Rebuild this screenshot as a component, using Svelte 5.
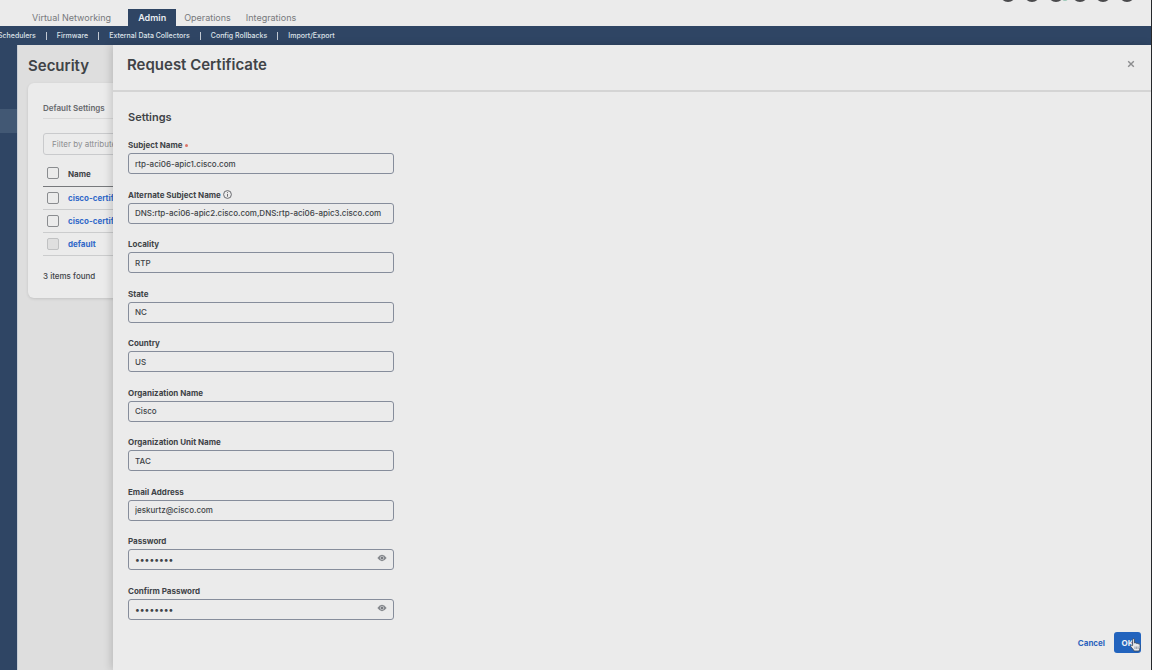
<script>
  const tabs = ["Virtual Networking", "Admin", "Operations", "Integrations"];
  const subItems = [
    "Schedulers",
    "Firmware",
    "External Data Collectors",
    "Config Rollbacks",
    "Import/Export",
  ];
  const certificates = [
    { name: "cisco-certificate", disabled: false },
    { name: "cisco-certificate-2", disabled: false },
    { name: "default", disabled: true },
  ];
  const tools = [8, 32, 56, 80, 103, 127];

  let fields = $state([
    { id: "subject", label: "Subject Name", value: "rtp-aci06-apic1.cisco.com", required: true },
    {
      id: "alternate",
      label: "Alternate Subject Name",
      value: "DNS:rtp-aci06-apic2.cisco.com,DNS:rtp-aci06-apic3.cisco.com",
      info: true,
    },
    { id: "locality", label: "Locality", value: "RTP" },
    { id: "state", label: "State", value: "NC" },
    { id: "country", label: "Country", value: "US" },
    { id: "organization", label: "Organization Name", value: "Cisco" },
    { id: "unit", label: "Organization Unit Name", value: "TAC" },
    { id: "email", label: "Email Address", value: "jeskurtz@cisco.com" },
    { id: "password", label: "Password", value: "password", secret: true, visible: false },
    { id: "confirm", label: "Confirm Password", value: "password", secret: true, visible: false },
  ]);
</script>

<div class="app">
  <header class="topbar">
    <nav class="tabs">
      {#each tabs as tab}
        <a href="#top" class:active={tab === "Admin"}>{tab}</a>
      {/each}
    </nav>
    <svg class="tools" width="136" height="3" viewBox="0 0 136 3" aria-hidden="true">
      {#each tools as x}
        <circle cx={x} cy="-6" r="8" fill="#4a4a4c" />
      {/each}
      <circle cx="65" cy="-2" r="3" fill="#9cc9b8" />
    </svg>
  </header>

  <nav class="subnav">
    {#each subItems as item}
      <a href="#sub">{item}</a>
    {/each}
  </nav>

  <div class="workspace">
    <aside class="rail"><div class="rail-active"></div></aside>

    <main class="page">
      <h1>Security</h1>
      <section class="card">
        <a class="card-tab" href="#settings">Default Settings</a>
        <input class="filter" type="text" placeholder="Filter by attributes" aria-label="Filter by attributes" />
        <table>
          <thead>
            <tr>
              <th class="check"><input type="checkbox" aria-label="Select all" /></th>
              <th class="name">Name</th>
            </tr>
          </thead>
          <tbody>
            {#each certificates as cert}
              <tr>
                <td class="check">
                  <input type="checkbox" disabled={cert.disabled} aria-label={cert.name} />
                </td>
                <td><a href="#cert">{cert.name}</a></td>
              </tr>
            {/each}
          </tbody>
        </table>
        <p class="count">3 items found</p>
      </section>
    </main>

    <!-- Drawer slides over the page content -->
    <div class="drawer" role="dialog" aria-labelledby="drawer-title">
      <div class="drawer-header">
        <h2 id="drawer-title">Request Certificate</h2>
        <button class="close" type="button" aria-label="Close">
          <svg width="8" height="8" viewBox="0 0 8 8">
            <path d="M1.2 1.2 6.8 6.8M6.8 1.2 1.2 6.8" stroke="#8b8c8e" stroke-width="1.4" />
          </svg>
        </button>
      </div>

      <form id="request">
        <h3>Settings</h3>
        <div class="fields">
          {#each fields as field}
            <div class="field">
              <div class="label">
                <label for={field.id}>{field.label}</label>
                {#if field.required}<span class="required"></span>{/if}
                {#if field.info}
                  <svg class="info" width="9" height="9" viewBox="0 0 9 9" aria-hidden="true">
                    <circle cx="4.5" cy="4.5" r="3.9" fill="none" stroke="#5b5e63" stroke-width="0.9" />
                    <path d="M4.5 4V6.7M4.5 2.2V3.1" stroke="#5b5e63" stroke-width="0.9" />
                  </svg>
                {/if}
              </div>
              <div class="control">
                <input
                  id={field.id}
                  class:secret={field.secret}
                  type={field.secret && !field.visible ? "password" : "text"}
                  bind:value={field.value}
                />
                {#if field.secret}
                  <button
                    class="eye"
                    type="button"
                    aria-label="Show password"
                    onclick={() => (field.visible = !field.visible)}
                  >
                    <svg width="10" height="8" viewBox="0 0 10 8">
                      <path d="M.4 4Q5-2.4 9.6 4 5 10.4.4 4Z" fill="#85888d" />
                      <circle cx="5" cy="4" r="2" fill="#c9cacd" />
                      <circle cx="5" cy="4" r="1.2" fill="#77797e" />
                    </svg>
                  </button>
                {/if}
              </div>
            </div>
          {/each}
        </div>
      </form>

      <div class="actions">
        <button class="cancel" type="button">Cancel</button>
        <button class="ok" type="submit" form="request">OK</button>
        <svg class="pointer" width="11" height="14" viewBox="0 0 11 14" aria-hidden="true">
          <path
            d="M2.6 7.6V1.7C2.6.3 4.5.3 4.5 1.7V5C5.1 4.5 6.1 4.7 6.3 5.4 6.9 5 7.9 5.2 8.1 6 8.9 5.6 10 6 10 7.1V9.5C10 11.1 9.3 11.7 9.1 13H4C3.8 11.8 2.1 10.5.8 8.6.2 7.6 1.5 6.6 2.6 7.6Z"
            fill="#e6e8eb"
            stroke="#3c4654"
            stroke-width="0.8"
          />
          <path d="M5 8.5V11M6.6 8.5V11M8.1 8.5V11" stroke="#69717d" stroke-width="0.6" />
        </svg>
      </div>
    </div>
  </div>
</div>

<style>
  :global(body) {
    margin: 0;
    background: #ebebeb;
  }

  .app {
    display: flex;
    flex-direction: column;
    box-sizing: border-box;
    height: 100vh;
    overflow: hidden;
    border-right: 1px solid #26282b;
    background: #ebebeb;
    color: #404347;
    font-family: Inter, "Liberation Sans", sans-serif;
    font-size: 8px;
    line-height: 12px;
  }

  a {
    color: inherit;
    text-decoration: none;
  }

  h1,
  h2,
  h3,
  p {
    margin: 0;
  }

  button,
  input {
    font: inherit;
    color: inherit;
  }

  button {
    padding: 0;
    border: 0;
    background: none;
    cursor: pointer;
  }

  /* Top navigation */
  .topbar {
    display: flex;
    justify-content: space-between;
    align-items: flex-start;
    flex: none;
    height: 26px;
    padding: 0 15px 0 24px;
  }

  .tabs {
    display: flex;
    align-self: flex-end;
    color: #77797c;
    font-size: 9px;
    line-height: 16px;
  }

  .tabs a {
    padding: 1px 7px 0 8px;
  }

  .tabs a.active {
    margin-left: 10px;
    padding: 1px 10px 0;
    background: #2f4564;
    color: #e9edf2;
    font-weight: 600;
  }

  .subnav {
    display: flex;
    align-items: center;
    box-sizing: border-box;
    flex: none;
    height: 19px;
    padding-top: 1px;
    background: #2f4564;
    color: #dde2e9;
    font-size: 7px;
    font-weight: 500;
  }

  .subnav a {
    padding: 0 10px;
    line-height: 8px;
  }

  .subnav a:first-child {
    margin-left: -2px;
    padding-left: 0;
  }

  .subnav a + a {
    border-left: 1px solid #c1c8d2;
  }

  /* Page behind the drawer */
  .workspace {
    position: relative;
    display: flex;
    flex: 1;
    min-height: 0;
  }

  .rail {
    flex: none;
    width: 17px;
    padding-top: 64px;
    border-right: 1px solid #c6ccd4;
    background: #2f4564;
  }

  .rail-active {
    height: 24px;
    background: #425874;
  }

  .page {
    flex: 1;
    padding: 11px 10px;
    background: #dedede;
  }

  h1,
  h2 {
    font-size: 15px;
    line-height: 20px;
    font-weight: 600;
  }

  .card {
    margin-top: 7px;
    padding: 16px 15px;
    border-radius: 6px;
    background: #ebebeb;
    box-shadow: 0 1px 3px rgba(0, 0, 0, 0.12);
  }

  .card-tab {
    display: block;
    padding: 3px 0 4px;
    border-bottom: 1px solid #d9d9d9;
    color: #66686b;
    font-weight: 600;
  }

  .filter {
    box-sizing: border-box;
    display: block;
    width: 100%;
    height: 22px;
    margin: 14px 0 7px;
    padding: 0 8px;
    border: 1px solid #c9cacc;
    border-radius: 3px;
    background: transparent;
  }

  .filter::placeholder {
    color: #8b8d90;
    opacity: 1;
  }

  table {
    width: 100%;
    border-collapse: collapse;
  }

  th,
  td {
    box-sizing: border-box;
    height: 23px;
    padding: 0;
    border-bottom: 1px solid #cbcccd;
    text-align: left;
    font-weight: 600;
  }

  th {
    height: 24px;
    padding-bottom: 2px;
    border-bottom: 1px solid #77797c;
  }

  .name {
    padding-bottom: 0;
    font-weight: 700;
  }

  td a {
    color: #3169c9;
    font-weight: 700;
  }

  .check {
    width: 25px;
  }

  input[type="checkbox"] {
    appearance: none;
    display: block;
    box-sizing: border-box;
    width: 12px;
    height: 12px;
    margin: 0 4px;
    border: 1px solid #8a8c8f;
    border-radius: 2px;
  }

  input[type="checkbox"]:disabled {
    border-color: #c0c1c2;
    background: #dfdfdf;
  }

  .count {
    padding-top: 14px;
    font-weight: 500;
  }

  /* Drawer */
  .drawer {
    position: absolute;
    inset: 0 0 0 113px;
    display: flex;
    flex-direction: column;
    background: #ebebeb;
    box-shadow: -2px 0 8px rgba(0, 0, 0, 0.16);
  }

  .drawer-header {
    display: flex;
    justify-content: space-between;
    align-items: flex-start;
    box-sizing: border-box;
    height: 47px;
    padding: 10px 16px 0 14px;
    border-bottom: 2px solid #d4d4d4;
  }

  .close {
    display: flex;
    padding: 5px 0;
  }

  form {
    display: flex;
    flex: 1;
    flex-direction: column;
    min-height: 0;
    padding: 17px 15px 0;
  }

  h3 {
    font-size: 11px;
    line-height: 16px;
    font-weight: 600;
  }

  .fields {
    display: flex;
    flex: 1;
    flex-direction: column;
    justify-content: space-between;
    width: 266px;
    padding-top: 13px;
  }

  .label {
    display: flex;
    align-items: center;
    gap: 2px;
    padding-top: 1px;
    margin-bottom: 2px;
    font-weight: 700;
  }

  .required {
    width: 3px;
    height: 3px;
    border-radius: 50%;
    background: #dc7468;
  }

  .control {
    position: relative;
  }

  .control input {
    box-sizing: border-box;
    display: block;
    width: 100%;
    height: 21px;
    padding: 0 6px;
    border: 1px solid #868d9b;
    border-radius: 3px;
    background: transparent;
    font-weight: 500;
  }

  .control .secret {
    font-size: 9px;
  }

  .eye {
    position: absolute;
    top: 5px;
    right: 7px;
    display: flex;
  }

  .actions {
    position: relative;
    display: flex;
    justify-content: flex-end;
    align-items: center;
    gap: 9px;
    padding: 12px 10px 17px;
    font-weight: 700;
  }

  .cancel {
    color: #2c63bd;
  }

  .ok {
    width: 27px;
    height: 21px;
    border-radius: 3px;
    background: #2263bd;
    color: #f0f3f8;
  }

  .pointer {
    position: absolute;
    right: 10px;
    bottom: 18px;
    pointer-events: none;
  }
</style>
